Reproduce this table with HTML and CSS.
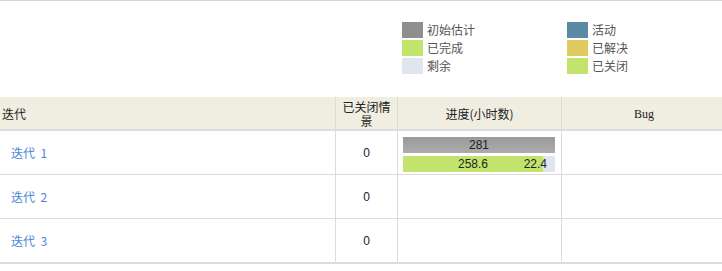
FILE: index.html
```html
<!DOCTYPE html>
<html lang="zh">
<head>
<meta charset="utf-8">
<link rel="stylesheet" href="styles.css">
</head>
<body>
<div class="page">
  <div class="legend">
    <div class="item"><span class="sw sw-est"></span>初始估计</div>
    <div class="item"><span class="sw sw-active"></span>活动</div>
    <div class="item"><span class="sw sw-done"></span>已完成</div>
    <div class="item"><span class="sw sw-resolved"></span>已解决</div>
    <div class="item"><span class="sw sw-remain"></span>剩余</div>
    <div class="item"><span class="sw sw-closed"></span>已关闭</div>
  </div>
  <div class="grid">
    <div class="cell head first">迭代</div>
    <div class="cell head center">已关闭情景</div>
    <div class="cell head center">进度(小时数)</div>
    <div class="cell head center bug">Bug</div>

    <div class="cell row first"><a class="link" href="#">迭代&nbsp; 1</a></div>
    <div class="cell row center">0</div>
    <div class="cell row barcell">
      <div class="bar bar-est">281</div>
      <div class="bar bar-prog">
        <div class="seg-done" style="width:140px">258.6</div>
        <div class="seg-remain"></div>
        <span class="remain-label">22.4</span>
      </div>
    </div>
    <div class="cell row"></div>

    <div class="cell row first"><a class="link" href="#">迭代&nbsp; 2</a></div>
    <div class="cell row center">0</div>
    <div class="cell row"></div>
    <div class="cell row"></div>

    <div class="cell row first last"><a class="link" href="#">迭代&nbsp; 3</a></div>
    <div class="cell row center last">0</div>
    <div class="cell row last"></div>
    <div class="cell row last"></div>
  </div>
</div>
</body>
</html>
```
FILE: styles.css
```css
html, body {
  margin: 0;
  padding: 0;
  background: #fff;
}
body {
  font-family: "Liberation Sans", "Noto Sans CJK SC", sans-serif;
  font-size: 12px;
  color: #222;
}
.page {
  width: 722px;
  border-top: 1px solid #d6d6d6;
}
.legend {
  display: grid;
  grid-template-columns: 165px auto;
  row-gap: 2px;
  margin: 21px 0 0 402px;
  height: 52px;
}
.item {
  display: flex;
  align-items: center;
  height: 16px;
  color: #555;
  font-family: "Noto Sans CJK SC", sans-serif;
  font-size: 12px;
  line-height: 16px;
}
.sw {
  display: inline-block;
  width: 21px;
  height: 16px;
  margin-right: 4px;
}
.sw-est { background: #8f8f8f; }
.sw-active { background: #5b8aa5; }
.sw-done { background: #c2e46c; }
.sw-resolved { background: #dfcb62; }
.sw-remain { background: #dfe6ed; }
.sw-closed { background: #c2e46c; }

.grid {
  margin-top: 23px;
  display: grid;
  grid-template-columns: 335px 62px 164px 161px;
}
.cell {
  box-sizing: border-box;
  border-left: 1px solid #dcdcdc;
  display: flex;
  align-items: center;
}
.cell.first { border-left: none; }
.head {
  height: 34px;
  background: #f0ede1;
  border-bottom: 2px solid #dcdcdc;
  border-left-color: #dedbd0;
  font-family: "Noto Sans CJK SC", sans-serif;
  font-size: 12px;
  line-height: 14px;
  color: #222;
  padding: 1px 2px 0;
}
.head.first { padding-left: 2px; }
.center {
  justify-content: center;
  text-align: center;
}
.head.bug {
  font-family: "Liberation Serif", serif;
  font-size: 12px;
  padding-left: 6px;
}
.row {
  height: 44px;
  border-bottom: 1px solid #dcdcdc;
}
.row.last {
  height: 45px;
  border-bottom-width: 2px;
}
.row.first {
  padding-left: 11px;
}
.link {
  color: #4a86d6;
  text-decoration: none;
  font-family: "Noto Sans CJK SC", sans-serif;
  font-size: 12px;
}
.barcell {
  flex-direction: column;
  align-items: flex-start;
  padding: 6px 5px 0;
}
.bar {
  width: 152px;
  height: 16px;
  line-height: 16px;
  font-size: 12px;
  color: #222;
}
.bar-est {
  background: linear-gradient(#9a9a9a, #acacac);
  text-align: center;
}
.bar-prog {
  margin-top: 3px;
  display: flex;
  position: relative;
}
.seg-done {
  background: #c2e46c;
  text-align: center;
}
.seg-remain {
  flex: 1;
  background: #dfe6ed;
}
.remain-label {
  position: absolute;
  right: 8px;
  top: 0;
}
```
